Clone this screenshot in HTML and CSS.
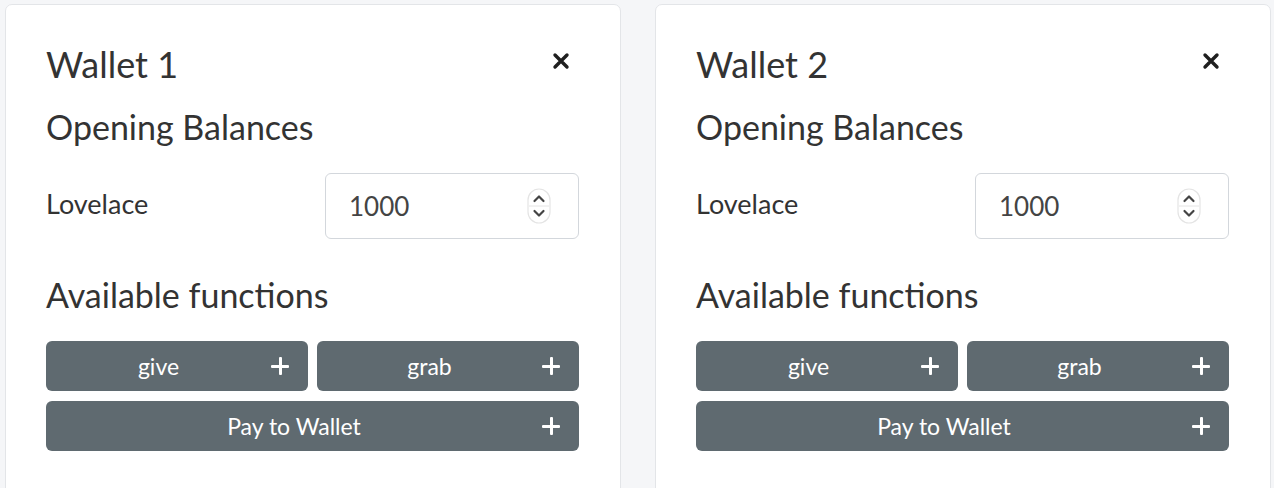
FILE: index.html
```html
<!DOCTYPE html>
<html lang="en">
<head>
<meta charset="utf-8">
<title>Wallets</title>
<link rel="stylesheet" href="styles.css">
</head>
<body>
<div class="wallets">
  <section class="card">
    <div class="card-head">
      <h1 class="title">Wallet 1</h1>
      <button class="close" aria-label="Close">
        <svg width="18" height="18" viewBox="0 0 18 18"><path d="M3 3 L15 15 M15 3 L3 15" stroke="#1f1f1f" stroke-width="3.4" stroke-linecap="round"/></svg>
      </button>
    </div>
    <h2 class="section">Opening Balances</h2>
    <div class="balance-row">
      <label class="balance-label">Lovelace</label>
      <div class="num-field">
        <input class="num-input" type="text" value="1000">
        <svg class="spin" width="24" height="36" viewBox="0 0 24 36"><rect x="1" y="1" width="22" height="34" rx="11" fill="#fff" stroke="#e4e4e4" stroke-width="1.2"/><line x1="2" y1="18" x2="22" y2="18" stroke="#e4e4e4" stroke-width="1"/><path d="M7.5 13 L12 8.5 L16.5 13" fill="none" stroke="#444" stroke-width="2.2" stroke-linecap="round" stroke-linejoin="round"/><path d="M7.5 23 L12 27.5 L16.5 23" fill="none" stroke="#444" stroke-width="2.2" stroke-linecap="round" stroke-linejoin="round"/></svg>
      </div>
    </div>
    <h2 class="section section-fn">Available functions</h2>
    <div class="fn-grid">
      <button class="fn-btn"><span class="fn-name">give</span><span class="plus"></span></button>
      <button class="fn-btn"><span class="fn-name">grab</span><span class="plus"></span></button>
      <button class="fn-btn fn-wide"><span class="fn-name">Pay to Wallet</span><span class="plus"></span></button>
    </div>
  </section>
  <section class="card">
    <div class="card-head">
      <h1 class="title">Wallet 2</h1>
      <button class="close" aria-label="Close">
        <svg width="18" height="18" viewBox="0 0 18 18"><path d="M3 3 L15 15 M15 3 L3 15" stroke="#1f1f1f" stroke-width="3.4" stroke-linecap="round"/></svg>
      </button>
    </div>
    <h2 class="section">Opening Balances</h2>
    <div class="balance-row">
      <label class="balance-label">Lovelace</label>
      <div class="num-field">
        <input class="num-input" type="text" value="1000">
        <svg class="spin" width="24" height="36" viewBox="0 0 24 36"><rect x="1" y="1" width="22" height="34" rx="11" fill="#fff" stroke="#e4e4e4" stroke-width="1.2"/><line x1="2" y1="18" x2="22" y2="18" stroke="#e4e4e4" stroke-width="1"/><path d="M7.5 13 L12 8.5 L16.5 13" fill="none" stroke="#444" stroke-width="2.2" stroke-linecap="round" stroke-linejoin="round"/><path d="M7.5 23 L12 27.5 L16.5 23" fill="none" stroke="#444" stroke-width="2.2" stroke-linecap="round" stroke-linejoin="round"/></svg>
      </div>
    </div>
    <h2 class="section section-fn">Available functions</h2>
    <div class="fn-grid">
      <button class="fn-btn"><span class="fn-name">give</span><span class="plus"></span></button>
      <button class="fn-btn"><span class="fn-name">grab</span><span class="plus"></span></button>
      <button class="fn-btn fn-wide"><span class="fn-name">Pay to Wallet</span><span class="plus"></span></button>
    </div>
  </section>
</div>
</body>
</html>
```

FILE: styles.css
```css
* { box-sizing: border-box; }
html, body { margin: 0; height: 100%; overflow: hidden; }
body {
  background: #f5f6f8;
  font-family: Lato, "Open Sans", sans-serif;
  color: #333;
}
.wallets {
  display: flex;
  gap: 34px;
  padding: 4px 3px 0 5px;
}
.card {
  flex: 1 1 0;
  min-width: 0;
  min-height: 520px;
  background: #fff;
  border: 1px solid #e3e5e8;
  border-radius: 7px;
  padding: 0 41px 0 40px;
}
.card-head {
  display: flex;
  justify-content: space-between;
  align-items: flex-start;
  margin-top: 39px;
}
.title {
  margin: 0;
  font-size: 36px;
  font-weight: 400;
  line-height: 40px;
  color: #333;
}
.close {
  border: 0;
  background: none;
  padding: 0;
  margin: 8px 9px 0 0;
  width: 18px;
  height: 18px;
  display: flex;
}
.section {
  margin: 23px 0 0;
  font-size: 34px;
  font-weight: 400;
  line-height: 40px;
  color: #333;
}
.balance-row {
  display: flex;
  align-items: center;
  margin-top: 26px;
}
.balance-label {
  width: 279px;
  flex: none;
  font-size: 27px;
  color: #333;
  padding-bottom: 5px;
}
.num-field {
  flex: 1;
  min-width: 0;
  height: 66px;
  border: 1.5px solid #d3d7dc;
  border-radius: 6px;
  display: flex;
  align-items: center;
  padding: 0 27px 0 23px;
}
.num-input {
  flex: 1;
  width: 0;
  min-width: 0;
  border: 0;
  outline: none;
  font-family: inherit;
  font-size: 26px;
  color: #444;
  background: transparent;
  padding: 0;
}
.spin { flex: none; }
.section-fn { margin-top: 36px; }
.fn-grid {
  display: grid;
  grid-template-columns: 1fr 1fr;
  column-gap: 9px;
  row-gap: 10px;
  margin-top: 26px;
}
.fn-wide { grid-column: 1 / 3; }
.fn-btn {
  height: 50px;
  border: 0;
  border-radius: 6px;
  background: #5f6a70;
  color: #fff;
  font-family: inherit;
  font-size: 23px;
  display: flex;
  align-items: center;
  padding: 0 19px 0 0;
}
.fn-name { flex: 1; text-align: center; }
.plus {
  position: relative;
  width: 18px;
  height: 18px;
  flex: none;
}
.plus::before, .plus::after {
  content: "";
  position: absolute;
  background: #fff;
  border-radius: 1px;
}
.plus::before { left: 0; top: 7.5px; width: 18px; height: 3px; }
.plus::after { left: 7.5px; top: 0; width: 3px; height: 18px; }
```
